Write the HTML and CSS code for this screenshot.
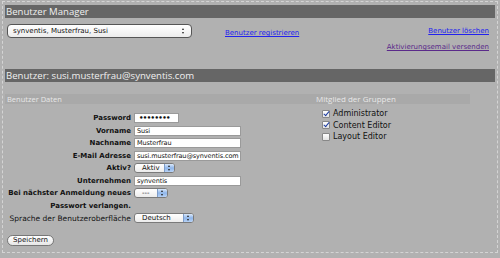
FILE: index.html
```html
<!DOCTYPE html>
<html lang="de">
<head>
    <meta charset="UTF-8">
    <title>Benutzer Manager</title>
    <link rel="stylesheet" href="styles.css">
</head>
<body>
    <div class="page">
        <h2 class="bar">Benutzer Manager</h2>

        <div class="toolbar">
            <div class="select user-select">synventis, Musterfrau, Susi<span class="arrows"></span></div>
            <a class="register" href="#">Benutzer registrieren</a>
            <div class="actions">
                <a href="#">Benutzer löschen</a>
                <a class="visited" href="#">Aktivierungsemail versenden</a>
            </div>
        </div>

        <h2 class="bar">Benutzer: susi.musterfrau@synventis.com</h2>

        <div class="subbar">
            <span class="sub-left">Benutzer Daten</span>
            <span class="sub-right">Mitglied der Gruppen</span>
        </div>

        <div class="details">
            <table class="user-form">
                <tr>
                    <th>Password</th>
                    <td><div class="input short dots">&bull;&bull;&bull;&bull;&bull;&bull;&bull;&bull;</div></td>
                </tr>
                <tr>
                    <th>Vorname</th>
                    <td><div class="input">Susi</div></td>
                </tr>
                <tr>
                    <th>Nachname</th>
                    <td><div class="input">Musterfrau</div></td>
                </tr>
                <tr>
                    <th>E-Mail Adresse</th>
                    <td><div class="input">susi.musterfrau@synventis.com</div></td>
                </tr>
                <tr>
                    <th>Aktiv?</th>
                    <td><div class="select blue small">Aktiv<span class="arrows"></span></div></td>
                </tr>
                <tr>
                    <th>Unternehmen</th>
                    <td><div class="input">synventis</div></td>
                </tr>
                <tr>
                    <th>Bei nächster Anmeldung neues</th>
                    <td><div class="select blue tiny">---<span class="arrows"></span></div></td>
                </tr>
                <tr>
                    <th>Passwort verlangen.</th>
                    <td></td>
                </tr>
                <tr>
                    <th class="plain">Sprache der Benutzeroberfläche</th>
                    <td><div class="select blue medium">Deutsch<span class="arrows"></span></div></td>
                </tr>
            </table>

            <ul class="groups">
                <li><span class="check on"></span>Administrator</li>
                <li><span class="check on"></span>Content Editor</li>
                <li><span class="check"></span>Layout Editor</li>
            </ul>
        </div>

        <button class="save">Speichern</button>
    </div>
</body>
</html>
```

FILE: styles.css
```css
body {
    margin: 0;
    padding: 0;
    background-color: #b1b1b1;
    font-family: "DejaVu Sans", sans-serif;
    color: #111;
}
.page {
    margin: 1px 2px 3px 2px;
    height: 247px;
    padding: 3px 2px 0 2px;
    border: 1px dashed #d4d4d4;
}
.bar {
    margin: 0;
    height: 13px;
    line-height: 13px;
    padding-left: 1px;
    background-color: #666;
    color: #f0f0f0;
    font-family: "Open Sans", sans-serif;
    font-size: 9.6px;
    font-weight: normal;
}
.toolbar {
    display: flex;
    height: 51px;
    padding: 6px 0 0 2px;
    box-sizing: border-box;
}
.select {
    position: relative;
    box-sizing: border-box;
    height: 10px;
    line-height: 9px;
    padding-left: 7px;
    font-size: 7px;
    background: linear-gradient(#ffffff, #ececec);
    border: 1px solid #7a7a7a;
    border-radius: 3px;
}
.select .arrows {
    position: absolute;
    right: 3px;
    top: 1px;
    width: 3px;
    height: 6px;
}
.select .arrows::before,
.select .arrows::after {
    content: "";
    position: absolute;
    left: 0;
    border-left: 1.5px solid transparent;
    border-right: 1.5px solid transparent;
}
.select .arrows::before {
    top: 0;
    border-bottom: 2px solid #222;
}
.select .arrows::after {
    bottom: 0;
    border-top: 2px solid #222;
}
.select.blue .arrows {
    top: 0;
    right: 0;
    width: 9px;
    height: 8px;
    border-radius: 0 2px 2px 0;
    background: linear-gradient(#dbe9fb, #8fb6ea 50%, #b7d2f6);
    border-left: 1px solid #7e9cc8;
}
.select.blue .arrows::before,
.select.blue .arrows::after {
    left: 3px;
}
.select.blue .arrows::before {
    top: 1px;
}
.select.blue .arrows::after {
    bottom: 1px;
}
.user-select {
    width: 185px;
    height: 14px;
    line-height: 12px;
    padding-left: 5px;
    border-color: #555;
    border-radius: 4px;
}
.user-select .arrows {
    top: 3px;
    right: 6px;
}
.register {
    margin: 5px 0 0 33px;
    font-size: 7px;
    color: #2222ee;
    align-self: flex-start;
}
.actions {
    margin-left: auto;
    margin-right: 6px;
    display: flex;
    flex-direction: column;
    align-items: flex-end;
    gap: 8px;
    padding-top: 3px;
}
.actions a {
    font-size: 7px;
    color: #2222ee;
}
.actions a.visited {
    color: #5a2a8a;
}
a {
    text-decoration: underline;
}
.subbar {
    display: flex;
    width: 465px;
    height: 10px;
    line-height: 10px;
    margin-top: 12px;
    background-color: #a9a9a9;
    color: #e8e8e8;
    font-family: "Open Sans", sans-serif;
    font-size: 7.5px;
}
.sub-left {
    padding-left: 2px;
    width: 309px;
}
.sub-right {
    font-size: 8px;
}
.details {
    display: flex;
    margin-top: 8px;
}
.user-form {
    border-collapse: collapse;
    width: 310px;
}
.user-form th {
    text-align: right;
    font-size: 7px;
    font-weight: bold;
    white-space: nowrap;
    padding: 0 3px 0 0;
    height: 12.5px;
    width: 126px;
}
.user-form th.plain {
    font-weight: normal;
    font-size: 7.5px;
}
.user-form td {
    padding: 0;
}
.input {
    box-sizing: border-box;
    width: 107px;
    height: 10px;
    line-height: 9px;
    padding-left: 2px;
    font-size: 6.5px;
    letter-spacing: -0.1px;
    white-space: nowrap;
    overflow: hidden;
    background-color: #fff;
    border: 1px solid #9a9a9a;
}
.input.short {
    width: 45px;
}
.input.dots {
    font-size: 7px;
    font-weight: bold;
    line-height: 8px;
    padding-left: 4px;
    letter-spacing: -0.6px;
}
.select.small {
    width: 41px;
}
.select.tiny {
    width: 34px;
}
.select.medium {
    width: 60px;
}
.groups {
    list-style: none;
    margin: -4px 0 0 0;
    padding: 0 0 0 7px;
    font-size: 8px;
}
.groups li {
    display: flex;
    align-items: center;
    height: 11.5px;
}
.check {
    box-sizing: border-box;
    width: 8px;
    height: 8px;
    margin-right: 3px;
    background: linear-gradient(#fff, #e4e4e4);
    border: 1px solid #888;
    border-radius: 1px;
    position: relative;
}
.check.on::after {
    content: "";
    position: absolute;
    left: 2px;
    top: -1px;
    width: 2px;
    height: 5px;
    border-right: 1.5px solid #1a3aa0;
    border-bottom: 1.5px solid #1a3aa0;
    transform: rotate(40deg);
}
.save {
    margin: 10px 0 0 2px;
    height: 11px;
    padding: 0 5px;
    font-family: "DejaVu Sans", sans-serif;
    font-size: 7px;
    line-height: 9px;
    background: linear-gradient(#ffffff, #e6e6e6);
    border: 1px solid #777;
    border-radius: 6px;
    color: #111;
}
```
